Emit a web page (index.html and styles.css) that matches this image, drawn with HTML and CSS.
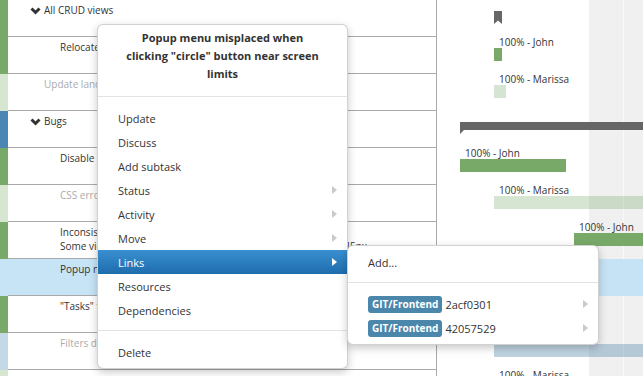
FILE: index.html
```html
<!DOCTYPE html>
<html lang="en">
<head>
    <meta charset="UTF-8">
    <title>Tasks - Gantt</title>
    <link rel="stylesheet" href="styles.css">
</head>
<body>
    <div class="screen">
        <!-- task tree -->
        <div class="tree">
            <div class="row">
                <span class="strip green"></span>
                <div class="cell group"><svg class="chev" width="11" height="8" viewBox="0 0 11 8"><polyline points="1.5,1.5 5.5,5.5 9.5,1.5" /></svg>All CRUD views</div>
            </div>
            <div class="row">
                <span class="strip green"></span>
                <div class="cell">Relocate menu items in the sidebar</div>
            </div>
            <div class="row">
                <span class="strip light-green"></span>
                <div class="cell leaf muted">Update landing page screenshots</div>
            </div>
            <div class="row">
                <span class="strip blue"></span>
                <div class="cell group"><svg class="chev" width="11" height="8" viewBox="0 0 11 8"><polyline points="1.5,1.5 5.5,5.5 9.5,1.5" /></svg>Bugs</div>
            </div>
            <div class="row">
                <span class="strip green"></span>
                <div class="cell">Disable drag on closed tasks</div>
            </div>
            <div class="row">
                <span class="strip light-green"></span>
                <div class="cell muted">CSS errors on Firefox</div>
            </div>
            <div class="row">
                <span class="strip green"></span>
                <div class="cell">Inconsistent margins<br>Some views have a different left margin, for example around 45px</div>
            </div>
            <div class="row selected">
                <span class="strip"></span>
                <div class="cell">Popup menu misplaced when clicking "circle" button near screen limits</div>
            </div>
            <div class="row">
                <span class="strip green"></span>
                <div class="cell">"Tasks" tab not refreshed</div>
            </div>
            <div class="row">
                <span class="strip steel"></span>
                <div class="cell muted">Filters do not persist</div>
            </div>
            <div class="row">
                <span class="strip light-green"></span>
                <div class="cell muted">Scrollbar in Gantt view is hidden when resizing</div>
            </div>
        </div>

        <!-- gantt chart -->
        <div class="gantt">
            <div class="g-row">
                <div class="task" style="left: 57px;">
                    <div class="task-label"></div>
                    <svg class="milestone" width="8" height="13" viewBox="0 0 8 13"><path d="M0 0 H8 V13 L4 9.5 L0 13 Z" /></svg>
                </div>
            </div>
            <div class="g-row">
                <div class="task" style="left: 57px;">
                    <div class="task-label">100% - John</div>
                    <div class="bar done" style="width: 8px;"></div>
                </div>
            </div>
            <div class="g-row">
                <div class="task" style="left: 57px;">
                    <div class="task-label">100% - Marissa</div>
                    <div class="bar pale" style="width: 12px;"></div>
                </div>
            </div>
            <div class="g-row">
                <div class="task" style="left: 23px;">
                    <div class="task-label"></div>
                    <div class="summary" style="width: 200px;"></div>
                </div>
            </div>
            <div class="g-row">
                <div class="task" style="left: 23px;">
                    <div class="task-label">100% - John</div>
                    <div class="bar done" style="width: 106px;"></div>
                </div>
            </div>
            <div class="g-row">
                <div class="task" style="left: 57px;">
                    <div class="task-label">100% - Marissa</div>
                    <div class="bar pale" style="width: 160px;"></div>
                </div>
            </div>
            <div class="g-row">
                <div class="task" style="left: 137px;">
                    <div class="task-label">100% - John</div>
                    <div class="bar done" style="width: 80px;"></div>
                </div>
            </div>
            <div class="g-row selected"></div>
            <div class="g-row"></div>
            <div class="g-row">
                <div class="task" style="left: 57px;">
                    <div class="task-label"></div>
                    <div class="bar steel" style="width: 160px;"></div>
                </div>
            </div>
            <div class="g-row">
                <div class="task" style="left: 57px;">
                    <div class="task-label">100% - Marissa</div>
                    <div class="bar pale" style="width: 160px;"></div>
                </div>
            </div>
        </div>

        <!-- context menu -->
        <div class="menu main-menu">
            <div class="menu-title">Popup menu misplaced when clicking "circle" button near screen limits</div>
            <ul class="menu-list">
                <li class="menu-item">Update</li>
                <li class="menu-item">Discuss</li>
                <li class="menu-item">Add subtask</li>
                <li class="menu-item">Status<span class="arrow"></span></li>
                <li class="menu-item">Activity<span class="arrow"></span></li>
                <li class="menu-item">Move<span class="arrow"></span></li>
                <li class="menu-item active">Links<span class="arrow"></span></li>
                <li class="menu-item">Resources</li>
                <li class="menu-item">Dependencies</li>
                <li class="menu-sep"></li>
                <li class="menu-item">Delete</li>
            </ul>
        </div>

        <div class="menu sub-menu">
            <ul class="menu-list">
                <li class="menu-item">Add...</li>
                <li class="menu-sep"></li>
                <li class="menu-item"><span class="badge">GIT/Frontend</span>2acf0301<span class="arrow"></span></li>
                <li class="menu-item"><span class="badge">GIT/Frontend</span>42057529<span class="arrow"></span></li>
            </ul>
        </div>
    </div>
</body>
</html>
```

FILE: styles.css
```css
/* Gantt view with context menu */
* {
    box-sizing: border-box;
}
body {
    margin: 0;
    font-family: "Open Sans", "DejaVu Sans", sans-serif;
    color: #333;
    background-color: #fff;
    overflow: hidden;
}
.screen {
    position: relative;
    display: flex;
    width: 643px;
    height: 376px;
    overflow: hidden;
}

/* tree */
.tree {
    width: 437px;
    flex: none;
    border-right: 1px solid #a9a9a9;
}
.row {
    display: flex;
    height: 37px;
}
.strip {
    width: 8px;
    flex: none;
}
.green { background-color: #78a969; }
.light-green { background-color: #d6e6d1; }
.blue { background-color: #4a87b2; }
.steel { background-color: #c4d8e5; }
.cell {
    flex: 1;
    min-width: 0;
    border-bottom: 1px solid #a9a9a9;
    padding: 3px 0 0 52px;
    font-size: 10px;
    line-height: 14px;
    white-space: nowrap;
    overflow: hidden;
}
.cell.group {
    padding-left: 22px;
}
.cell.leaf {
    padding-left: 36px;
}
.cell.muted {
    color: #ababab;
}
.chev {
    vertical-align: -1px;
    margin-right: 3px;
}
.chev polyline {
    fill: none;
    stroke: #333;
    stroke-width: 3;
}
.row.selected .strip,
.row.selected .cell {
    background-color: #c7e4f7;
}

/* gantt */
.gantt {
    flex: 1;
    overflow: hidden;
    background: linear-gradient(to right, #fff 152px, #f0f0f0 152px, #f0f0f0 186px, #f9f9f9 186px, #f9f9f9 187px, #f0f0f0 187px);
}
.g-row {
    position: relative;
    height: 37px;
}
.g-row.selected {
    background-color: rgba(190, 224, 247, 0.85);
}
.task {
    position: absolute;
    top: 0;
}
.task-label {
    height: 11px;
    padding-left: 5px;
    font-size: 10px;
    line-height: 11px;
    white-space: nowrap;
}
.bar {
    height: 13px;
}
.bar.done { background-color: #78a969; }
.bar.pale { background-color: rgba(120, 169, 105, 0.3); }
.bar.steel { background-color: rgba(70, 125, 165, 0.35); }
.milestone {
    display: block;
    fill: #666;
}
.summary {
    position: relative;
    height: 8px;
    background-color: #666;
}
.summary::after {
    content: "";
    position: absolute;
    left: 0;
    top: 8px;
    border-top: 4px solid #666;
    border-right: 4px solid transparent;
}

/* menus */
.menu {
    position: absolute;
    background-color: #fff;
    border: 1px solid rgba(0, 0, 0, 0.18);
    border-radius: 6px;
    box-shadow: 0 3px 8px rgba(0, 0, 0, 0.22);
    overflow: hidden;
}
.main-menu {
    left: 97px;
    top: 24px;
    width: 251px;
}
.sub-menu {
    left: 347px;
    top: 245px;
    width: 252px;
}
.menu-title {
    padding: 4px 22px 13px;
    border-bottom: 1px solid #e3e3e3;
    font-size: 11px;
    font-weight: bold;
    line-height: 18px;
    text-align: center;
}
.menu-list {
    list-style: none;
    margin: 0;
    padding: 9px 0 4px;
}
.sub-menu .menu-list {
    padding-top: 4px;
}
.menu-item {
    display: flex;
    align-items: center;
    height: 24px;
    padding: 0 10px 0 20px;
    font-size: 11px;
    white-space: nowrap;
}
.menu-item.active {
    color: #fff;
    background: linear-gradient(#3a8fd0, #1e6dad);
}
.menu-sep {
    height: 1px;
    margin: 8px 0 9px;
    background-color: #e3e3e3;
}
.arrow {
    margin-left: auto;
    border-left: 5px solid #cacaca;
    border-top: 4px solid transparent;
    border-bottom: 4px solid transparent;
}
.menu-item.active .arrow {
    border-left-color: #fff;
}
.badge {
    height: 17px;
    margin-right: 3px;
    padding: 0 4px;
    border-radius: 3px;
    background-color: #4a87ab;
    color: #fff;
    font-size: 10px;
    font-weight: bold;
    line-height: 17px;
}
```
